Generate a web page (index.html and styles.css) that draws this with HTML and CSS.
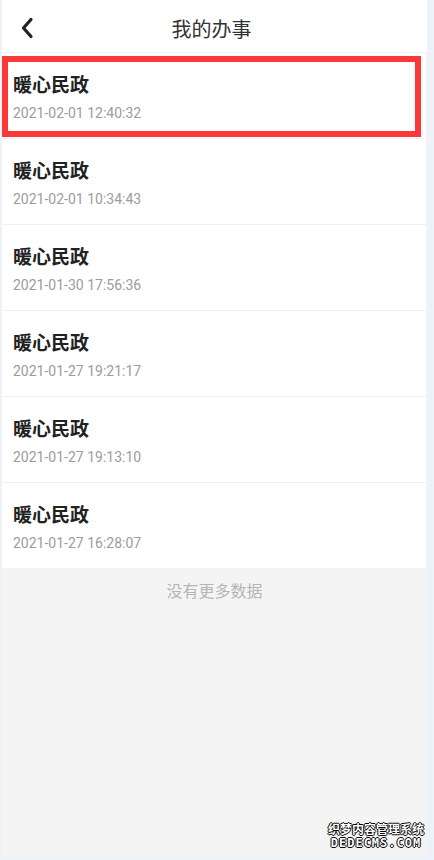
FILE: index.html
```html
<!DOCTYPE html>
<html lang="zh-CN">
<head>
    <meta charset="UTF-8">
    <meta name="viewport" content="width=device-width, initial-scale=1.0">
    <title>我的办事</title>
    <link rel="stylesheet" href="styles.css">
</head>
<body>

    <div class="page">
        <!-- 顶部导航 -->
        <div class="header">
            <span class="back">
                <svg width="14" height="22" viewBox="0 0 14 22">
                    <polyline points="11,2.5 3.5,11 11,19.5" fill="none" stroke="#222" stroke-width="3.2" stroke-linecap="round" stroke-linejoin="round"/>
                </svg>
            </span>
            <span class="title">我的办事</span>
        </div>

        <!-- 办事列表 -->
        <div class="list">
            <div class="item">
                <div class="item-name">暖心民政</div>
                <div class="item-time">2021-02-01 12:40:32</div>
                <div class="mark"></div>
            </div>
            <div class="item">
                <div class="item-name">暖心民政</div>
                <div class="item-time">2021-02-01 10:34:43</div>
            </div>
            <div class="item">
                <div class="item-name">暖心民政</div>
                <div class="item-time">2021-01-30 17:56:36</div>
            </div>
            <div class="item">
                <div class="item-name">暖心民政</div>
                <div class="item-time">2021-01-27 19:21:17</div>
            </div>
            <div class="item">
                <div class="item-name">暖心民政</div>
                <div class="item-time">2021-01-27 19:13:10</div>
            </div>
            <div class="item">
                <div class="item-name">暖心民政</div>
                <div class="item-time">2021-01-27 16:28:07</div>
            </div>
        </div>

        <div class="no-more">没有更多数据</div>

        <div class="watermark">
            <div>织梦内容管理系统</div>
            <div class="wm-en">DEDECMS.COM</div>
        </div>
    </div>

</body>
</html>
```

FILE: styles.css
```css
body {
    margin: 0;
    background-color: #edf2f9;
    font-family: Roboto, "Noto Sans CJK SC", sans-serif;
}

.page {
    position: relative;
    width: 425px;
    height: 856px;
    margin-left: 2px;
    background-color: #f4f4f4;
    display: flex;
    flex-direction: column;
}

.header {
    height: 48px;
    padding-top: 4px;
    background-color: #fff;
    display: flex;
    align-items: center;
    justify-content: center;
    position: relative;
}

.back {
    position: absolute;
    left: 18px;
    top: 17px;
    line-height: 0;
}

.title {
    font-size: 20px;
    color: #333;
    margin-right: 6px;
}

.list {
    background-color: #fff;
    margin-right: 1px;
}

.item {
    position: relative;
    padding: 18px 11px 15px;
    border-top: 1px solid #f0f0f0;
}

.item-name {
    font-size: 19px;
    font-weight: bold;
    color: #222;
    line-height: 26px;
    font-family: "Noto Sans CJK SC", sans-serif;
}

.item-time {
    margin-top: 6px;
    font-size: 14px;
    color: #9c9c9c;
    line-height: 20px;
}

/* 红色标注框 */
.mark {
    position: absolute;
    left: 0;
    top: 3px;
    width: 407px;
    height: 69px;
    border: 6px solid #fb3838;
}

.no-more {
    text-align: center;
    font-size: 16px;
    color: #b5b5b5;
    padding-top: 10px;
    font-family: "Noto Sans CJK SC", sans-serif;
}

.watermark {
    position: absolute;
    right: 3px;
    bottom: 5px;
    font-size: 12px;
    font-weight: bold;
    color: #fff;
    line-height: 15px;
    text-align: center;
    font-family: "Noto Sans CJK SC", sans-serif;
    text-shadow: 1px 0 #000, -1px 0 #000, 0 1px #000, 0 -1px #000;
}

.wm-en {
    font-family: "DejaVu Sans Mono", monospace;
    letter-spacing: 1px;
}
```
